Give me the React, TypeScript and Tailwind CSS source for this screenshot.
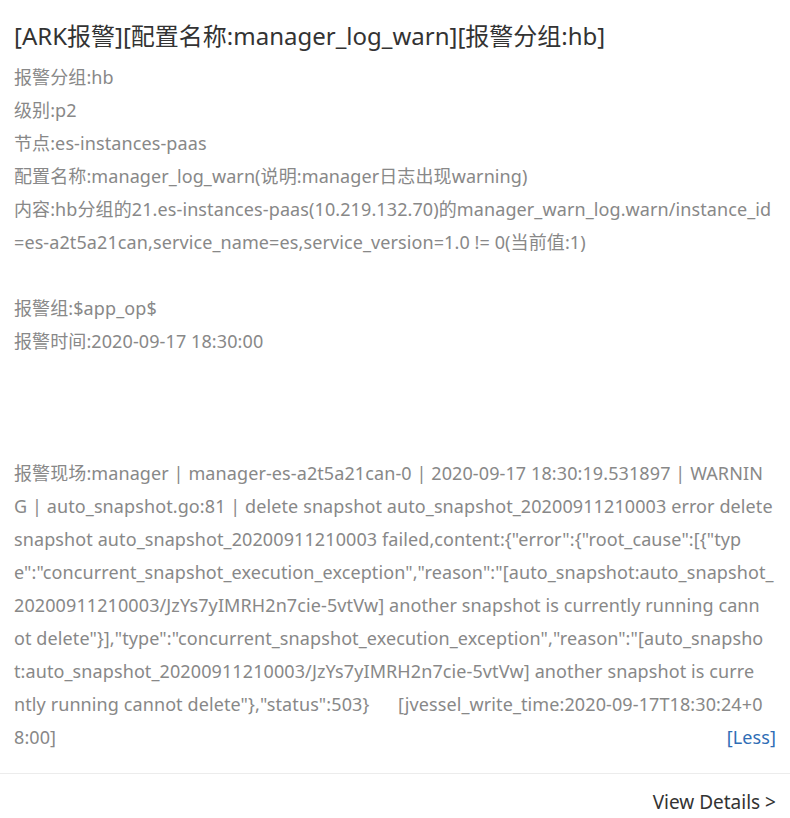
const title = "[ARK报警][配置名称:manager_log_warn][报警分组:hb]";

const body = `报警分组:hb
级别:p2
节点:es-instances-paas
配置名称:manager_log_warn(说明:manager日志出现warning)
内容:hb分组的21.es-instances-paas(10.219.132.70)的manager_warn_log.warn/instance_id=es-a2t5a21can,service_name=es,service_version=1.0 != 0(当前值:1)

报警组:$app_op$
报警时间:2020-09-17 18:30:00



`;

// 报警现场 log, kept in the same lines as the card shows them
const sceneLines = [
  "报警现场:manager | manager-es-a2t5a21can-0 | 2020-09-17 18:30:19.531897 | WARNIN",
  "G | auto_snapshot.go:81 | delete snapshot auto_snapshot_20200911210003 error delete",
  'snapshot auto_snapshot_20200911210003 failed,content:{"error":{"root_cause":[{"typ',
  'e":"concurrent_snapshot_execution_exception","reason":"[auto_snapshot:auto_snapshot_',
  "20200911210003/JzYs7yIMRH2n7cie-5vtVw] another snapshot is currently running cann",
  'ot delete"}],"type":"concurrent_snapshot_execution_exception","reason":"[auto_snapsho',
  "t:auto_snapshot_20200911210003/JzYs7yIMRH2n7cie-5vtVw] another snapshot is curre",
  'ntly running cannot delete"},"status":503}      [jvessel_write_time:2020-09-17T18:30:24+0',
];

export default function App() {
  return (
    <main className="min-h-screen bg-white font-['Noto_Sans','Noto_Sans_CJK_SC',sans-serif]">
      <div className="px-[14px] pt-[19px] pb-[19px]">
        <h1 className="text-[24px] leading-[33px] text-[#333] font-normal">{title}</h1>
        <div className="flow-root mt-[9px] text-[18px] leading-[33px] tracking-[0.1px] text-[#888]">
          <div className="whitespace-pre-wrap break-all">{body}</div>
          {sceneLines.map((line, i) => (
            <div key={i} className="whitespace-pre">{line}</div>
          ))}
          <div className="flex justify-between">
            <span>8:00]</span>
            <span className="text-[#2f6db5] cursor-pointer">[Less]</span>
          </div>
        </div>
      </div>
      <div className="border-t border-[#ececec] flex justify-end px-[14px] pt-[14px]">
        <button className="text-[19px] leading-[28px] text-[#333]">View Details &gt;</button>
      </div>
    </main>
  );
}
